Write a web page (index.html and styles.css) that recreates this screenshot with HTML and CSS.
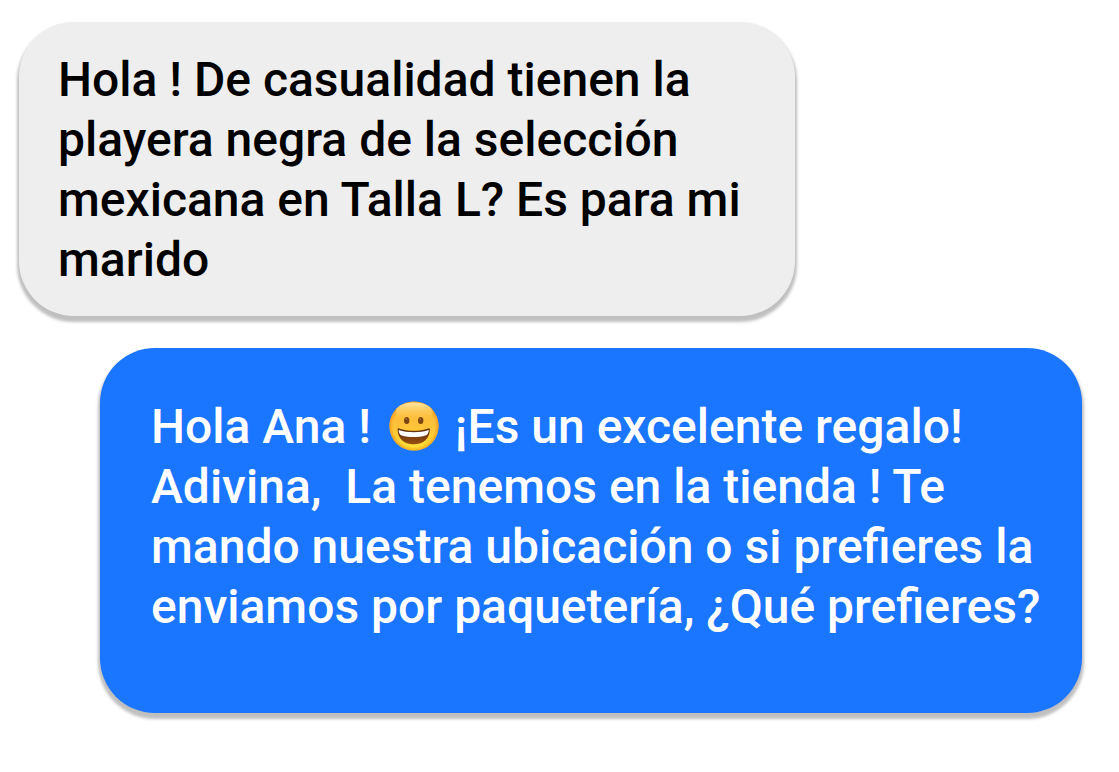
FILE: index.html
```
<!DOCTYPE html>
<html lang="es">
<head>
    <meta charset="UTF-8">
    <meta name="viewport" content="width=device-width, initial-scale=1.0">
    <title>Chat</title>
    <link rel="stylesheet" href="styles.css">
</head>
<body>
    <main class="chat">
        <div class="message received">
            <p>Hola ! De casualidad tienen la<br>playera negra de la selección<br>mexicana en Talla L? Es para mi<br>marido</p>
        </div>

        <div class="message sent">
            <p>Hola Ana ! <svg class="emoji" viewBox="0 0 50 50" role="img" aria-label="Cara sonriente">
                <defs>
                    <linearGradient id="face" x1="0" y1="0" x2="0" y2="1">
                        <stop offset="0" stop-color="#fab52f"/>
                        <stop offset="0.45" stop-color="#fdc03a"/>
                        <stop offset="0.75" stop-color="#fed034"/>
                        <stop offset="1" stop-color="#fbe63a"/>
                    </linearGradient>
                    <linearGradient id="shine" x1="0" y1="0" x2="0" y2="1">
                        <stop offset="0" stop-color="#ffe9a6"/>
                        <stop offset="1" stop-color="#ffc546" stop-opacity="0"/>
                    </linearGradient>
                    <linearGradient id="mouth" x1="0" y1="0" x2="0" y2="1">
                        <stop offset="0" stop-color="#5a2a0b"/>
                        <stop offset="1" stop-color="#985012"/>
                    </linearGradient>
                    <radialGradient id="edge">
                        <stop offset="0.84" stop-color="#f39a1b" stop-opacity="0"/>
                        <stop offset="1" stop-color="#ee8c16" stop-opacity="0.7"/>
                    </radialGradient>
                </defs>
                <circle cx="25" cy="25" r="24.6" fill="url(#face)"/>
                <circle cx="25" cy="25" r="24.6" fill="url(#edge)"/>
                <ellipse cx="25" cy="11" rx="18.5" ry="9.5" fill="url(#shine)"/>
                <ellipse cx="17.7" cy="19.5" rx="2.7" ry="3.6" fill="#7b4515"/>
                <ellipse cx="31.7" cy="19.5" rx="2.7" ry="3.6" fill="#7b4515"/>
                <circle cx="17.3" cy="18" r="0.8" fill="#ad7944"/>
                <circle cx="31.3" cy="18" r="0.8" fill="#ad7944"/>
                <path d="M8.6 28.2C8.6 27.4 9.2 27.2 10 27.5C19 30.6 30.5 30.6 39.4 27.5C40.2 27.2 40.8 27.4 40.8 28.2C40.8 37.5 34.5 43.2 24.7 43.2S8.6 37.5 8.6 28.2Z" fill="url(#mouth)"/>
                <path d="M9.6 29C18.5 32 31 32 39.8 29C39.6 32 38.8 33.8 36.6 34.4C29.5 36.4 20 36.4 12.8 34.4C10.6 33.8 9.8 32 9.6 29Z" fill="#fff"/>
            </svg> ¡Es un excelente regalo!<br>Adivina,&nbsp; La tenemos en la tienda ! Te<br>mando nuestra ubicación o si prefieres la<br>enviamos por paquetería, ¿Qué prefieres?</p>
        </div>
    </main>
</body>
</html>
```
FILE: styles.css
```
body {
    font-family: Roboto, sans-serif;
    margin: 0;
    background-color: #fff;
}

.chat {
    display: flex;
    flex-direction: column;
    gap: 32px;
    padding: 22px 37px 40px 19px;
}

.message {
    box-sizing: border-box;
    border-radius: 55px;
    box-shadow: 0 4px 3px 2px rgba(0, 0, 0, 0.25);
    font-size: 48px;
    font-weight: 500;
    line-height: 60px;
    white-space: nowrap;
}

.message p {
    margin: 0;
}

.received {
    align-self: flex-start;
    width: 776px;
    height: 294px;
    padding: 28px 39px;
    background-color: #eee;
    color: #000;
}

.sent {
    align-self: flex-end;
    width: 982px;
    height: 365px;
    padding: 49px 51px;
    background-color: #1a75ff;
    color: #fff;
}

.emoji {
    width: 50px;
    height: 50px;
    margin: 0 4px 0 6px;
    vertical-align: -8px;
}
```
